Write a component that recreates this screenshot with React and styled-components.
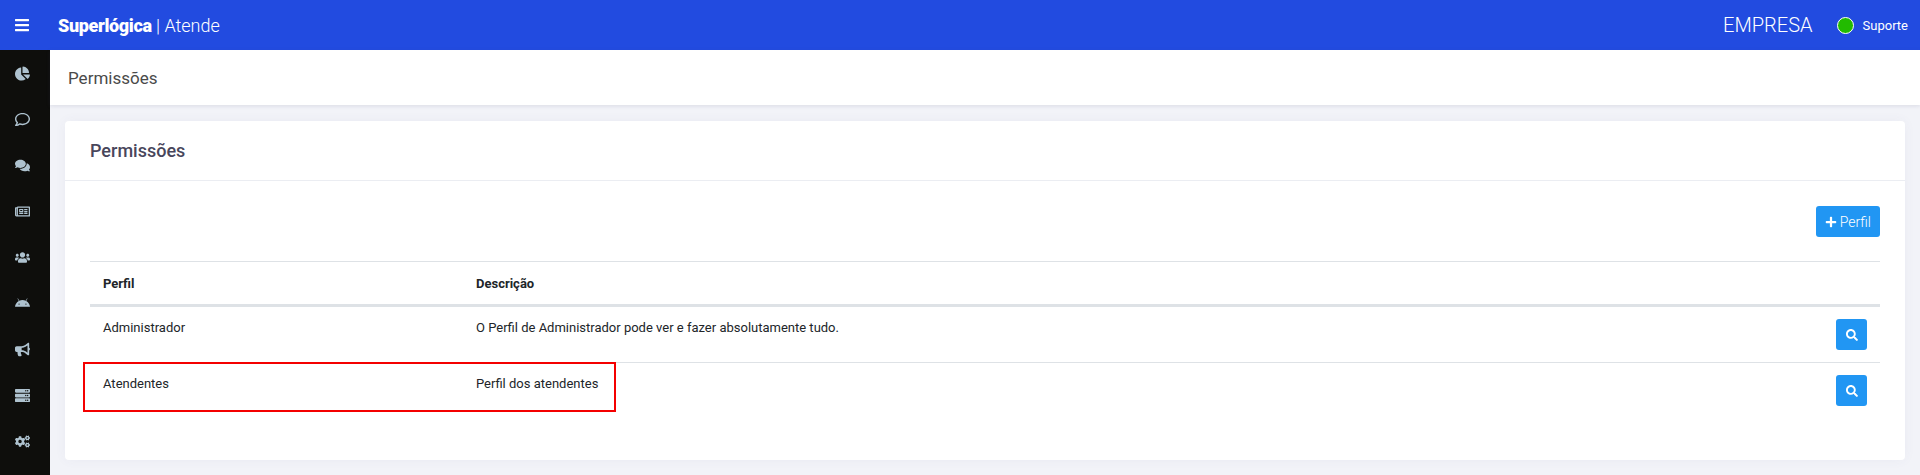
import React from "react";
import styled, { createGlobalStyle } from "styled-components";
import {
  FaBars, FaChartPie, FaRegComment, FaComments, FaRegNewspaper, FaUsers,
  FaAndroid, FaBullhorn, FaServer, FaCogs, FaPlus, FaSearch,
} from "react-icons/fa";

const Global = createGlobalStyle`
  html, body { margin: 0; padding: 0; height: 100%; background: #f2f3f8; overflow: hidden; }
  body { font-family: Roboto, "Liberation Sans", sans-serif; font-size: 13px; color: #212529; }
  #root { height: 100%; }
  * { box-sizing: border-box; }
`;

const Page = styled.div`
  display: grid;
  grid-template-columns: 50px 1fr;
  grid-template-rows: 50px 1fr;
  height: 475px;
`;

const TopBar = styled.header`
  grid-column: 1 / 3;
  display: flex;
  align-items: center;
  background: #224be0;
  color: #fff;
  padding-right: 12px;
`;

const MenuButton = styled.div`
  width: 44px;
  display: flex;
  justify-content: center;
  font-size: 16px;
`;

const Brand = styled.div`
  margin-left: 14px;
  font-size: 18px;
  font-weight: 300;
  flex: 1;
  & b { font-weight: 900; letter-spacing: -0.35px; }
`;

const Company = styled.div`
  font-size: 20px;
  font-weight: 300;
`;

const Status = styled.span`
  width: 17px;
  height: 17px;
  margin-left: 24px;
  border-radius: 50%;
  background: #22bb00;
  border: 1px solid #fff;
`;

const UserName = styled.div`
  margin-left: 9px;
  font-size: 13px;
`;

const SideBar = styled.nav`
  background: #0e0e0c;
  display: flex;
  flex-direction: column;
  align-items: center;
  padding-top: 0;
  padding-right: 6px;
`;

const SideItem = styled.div`
  height: 46px;
  display: flex;
  align-items: center;
  justify-content: center;
  color: #aec2cf;
  font-size: 15px;
`;

const Main = styled.main`
  min-width: 0;
  display: flex;
  flex-direction: column;
`;

const SubHeader = styled.div`
  height: 55px;
  flex: none;
  display: flex;
  align-items: center;
  padding: 0 18px;
  background: #fff;
  box-shadow: 0 1px 4px rgba(80, 80, 120, 0.15);
  font-size: 17px;
  color: #4a4a4a;
`;

const Card = styled.section`
  margin: 16px 15px 0 15px;
  height: 339px;
  background: #fff;
  border-radius: 4px;
  box-shadow: 0 0 12px rgba(80, 80, 140, 0.05);
`;

const CardHead = styled.div`
  height: 60px;
  display: flex;
  align-items: center;
  padding: 0 25px;
  border-bottom: 1px solid #ebedf2;
  font-size: 18px;
  font-weight: 500;
  color: #48465b;
`;

const CardBody = styled.div`
  position: relative;
  padding: 25px;
`;

const Actions = styled.div`
  display: flex;
  justify-content: flex-end;
  margin-bottom: 24px;
`;

const BlueButton = styled.button`
  height: 31px;
  min-width: 31px;
  padding: 0 ${(p) => (p.$icon ? "0" : "9px")};
  display: inline-flex;
  align-items: center;
  justify-content: center;
  gap: 3px;
  background: #2196f3;
  color: #fff;
  border: 0;
  border-radius: 3px;
  font-family: inherit;
  font-size: 14px;
  font-weight: 300;
`;

const Table = styled.table`
  width: 100%;
  border-collapse: collapse;
  table-layout: fixed;
`;

const Th = styled.th`
  height: 44px;
  padding: 0 13px;
  text-align: left;
  font-weight: 700;
  font-size: 13px;
  color: #212529;
  border-top: 1px solid #dee2e6;
  border-bottom: 3px solid #dee2e6;
  width: ${(p) => p.$w || "auto"};
`;

const Td = styled.td`
  height: 55px;
  padding: 12px 13px;
  vertical-align: top;
  line-height: 18px;
  font-size: 13px;
  color: #212529;
  border-bottom: ${(p) => (p.$last ? "0" : "1px solid #dee2e6")};
  text-align: ${(p) => (p.$right ? "right" : "left")};
`;

const Highlight = styled.div`
  position: absolute;
  left: 18px;
  top: 181px;
  width: 533px;
  height: 50px;
  border: 2px solid #f40000;
  pointer-events: none;
`;

const navIcons = [FaChartPie, FaRegComment, FaComments, FaRegNewspaper, FaUsers, FaAndroid, FaBullhorn, FaServer, FaCogs];

const rows = [
  ["Administrador", "O Perfil de Administrador pode ver e fazer absolutamente tudo."],
  ["Atendentes", "Perfil dos atendentes"],
];

export default function App() {
  return (
    <Page>
      <Global />
      <TopBar>
        <MenuButton><FaBars /></MenuButton>
        <Brand><b>Superlógica</b> | Atende</Brand>
        <Company>EMPRESA</Company>
        <Status />
        <UserName>Suporte</UserName>
      </TopBar>
      <SideBar>
        {navIcons.map((Icon, i) => (
          <SideItem key={i}><Icon /></SideItem>
        ))}
      </SideBar>
      <Main>
        <SubHeader>Permissões</SubHeader>
        <Card>
          <CardHead>Permissões</CardHead>
          <CardBody>
            <Actions>
              <BlueButton><FaPlus size={12} /> Perfil</BlueButton>
            </Actions>
            <Table>
              <thead>
                <tr>
                  <Th $w="373px">Perfil</Th>
                  <Th>Descrição</Th>
                  <Th $w="80px" />
                </tr>
              </thead>
              <tbody>
                {rows.map(([name, desc], i) => (
                  <tr key={name}>
                    <Td $last={i === rows.length - 1}>{name}</Td>
                    <Td $last={i === rows.length - 1}>{desc}</Td>
                    <Td $last={i === rows.length - 1} $right>
                      <BlueButton $icon><FaSearch size={12} /></BlueButton>
                    </Td>
                  </tr>
                ))}
              </tbody>
            </Table>
            <Highlight />
          </CardBody>
        </Card>
      </Main>
    </Page>
  );
}
